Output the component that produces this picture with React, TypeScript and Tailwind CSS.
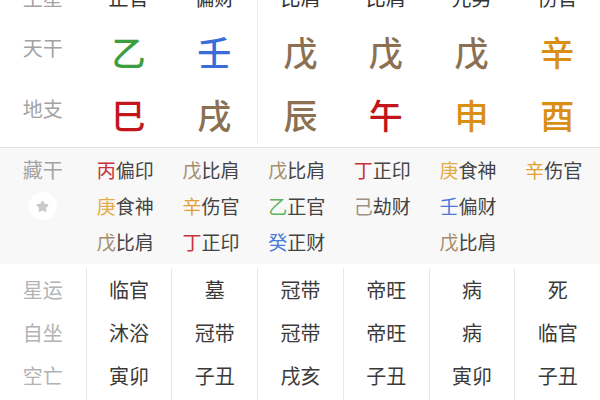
import { Star } from 'lucide-react'

type Cell = { t: string; c: string }

const mainStars = ['正官', '偏财', '比肩', '比肩', '元男', '伤官']

const stems: Cell[] = [
  { t: '乙', c: 'text-[#3d9e3f]' },
  { t: '壬', c: 'text-[#3a6bd6]' },
  { t: '戊', c: 'text-[#8b7152]' },
  { t: '戊', c: 'text-[#8b7152]' },
  { t: '戊', c: 'text-[#8b7152]' },
  { t: '辛', c: 'text-[#d98e14]' },
]

const branches: Cell[] = [
  { t: '巳', c: 'text-[#c3161c]' },
  { t: '戌', c: 'text-[#8b7152]' },
  { t: '辰', c: 'text-[#8b7152]' },
  { t: '午', c: 'text-[#c3161c]' },
  { t: '申', c: 'text-[#d98e14]' },
  { t: '酉', c: 'text-[#d98e14]' },
]

const red = 'text-[#c8323a]'
const yellow = 'text-[#e3ad4a]'
const tan = 'text-[#a58d6c]'
const orange = 'text-[#e0a032]'
const green = 'text-[#5db55e]'
const blue = 'text-[#4a7bd8]'
const grey = 'text-[#9c9080]'

const hidden: { g: string; c: string; s: string }[][] = [
  [
    { g: '丙', c: red, s: '偏印' },
    { g: '庚', c: yellow, s: '食神' },
    { g: '戊', c: tan, s: '比肩' },
  ],
  [
    { g: '戊', c: tan, s: '比肩' },
    { g: '辛', c: orange, s: '伤官' },
    { g: '丁', c: red, s: '正印' },
  ],
  [
    { g: '戊', c: tan, s: '比肩' },
    { g: '乙', c: green, s: '正官' },
    { g: '癸', c: blue, s: '正财' },
  ],
  [
    { g: '丁', c: red, s: '正印' },
    { g: '己', c: grey, s: '劫财' },
  ],
  [
    { g: '庚', c: yellow, s: '食神' },
    { g: '壬', c: blue, s: '偏财' },
    { g: '戊', c: tan, s: '比肩' },
  ],
  [{ g: '辛', c: orange, s: '伤官' }],
]

const fortune = [
  ['临官', '沐浴', '寅卯'],
  ['墓', '冠带', '子丑'],
  ['冠带', '冠带', '戌亥'],
  ['帝旺', '帝旺', '子丑'],
  ['病', '病', '寅卯'],
  ['死', '临官', '子丑'],
]

export default function App() {
  return (
    <div
      className="w-[600px] h-[400px] overflow-hidden bg-white"
      style={{ fontFamily: '"Noto Sans CJK SC", "Noto Sans", sans-serif' }}
    >
      {/* pillars */}
      <div className="-mt-[27px] pb-[4px]">
        <div className="grid grid-cols-7 h-[50px] text-[20px]">
          <div className="flex items-center justify-center text-[#a3a3a3]">主星</div>
          {mainStars.map((s, i) => (
            <div
              key={i}
              className={`flex items-center justify-center text-[#333] ${i === 2 ? 'border-l border-[#ececec]' : ''}`}
            >
              {s}
            </div>
          ))}
        </div>
        <div className="grid grid-cols-7 h-[56px]">
          <div className="flex items-center justify-center text-[20px] text-[#a3a3a3] pb-[6px]">天干</div>
          {stems.map((s, i) => (
            <div
              key={i}
              className={`flex items-center justify-center text-[34px] font-medium ${s.c} ${i === 2 ? 'border-l border-[#ececec]' : ''}`}
            >
              {s.t}
            </div>
          ))}
        </div>
        <div className="grid grid-cols-7 h-[64px]">
          <div className="flex items-center justify-center text-[20px] text-[#a3a3a3] pb-[4px]">地支</div>
          {branches.map((s, i) => (
            <div
              key={i}
              className={`flex items-center justify-center text-[34px] font-medium pt-[6px] ${s.c} ${i === 2 ? 'border-l border-[#ececec]' : ''}`}
            >
              {s.t}
            </div>
          ))}
        </div>
      </div>

      {/* hidden stems */}
      <div className="grid grid-cols-7 h-[117px] bg-[#f8f8f8] border-t border-[#e0e0e0] pt-[4px] text-[19px]">
        <div className="flex flex-col items-center">
          <div className="h-9 flex items-center text-[#a3a3a3] text-[20px]">藏干</div>
          <div className="h-9 flex items-center">
            <div className="w-[28px] h-[28px] rounded-full bg-white flex items-center justify-center">
              <Star size={13} className="text-[#c9c9c9] fill-[#c9c9c9]" />
            </div>
          </div>
        </div>
        {hidden.map((col, i) => (
          <div key={i} className="flex flex-col pl-[11px]">
            {col.map((h, j) => (
              <div key={j} className="h-9 flex items-center">
                <span className={h.c}>{h.g}</span>
                <span className="text-[#444]">{h.s}</span>
              </div>
            ))}
          </div>
        ))}
      </div>

      {/* fortune */}
      <div className="grid grid-cols-7 pt-[4px] text-[20px]">
        <div className="flex flex-col text-[#b3b3b3]">
          {['星运', '自坐', '空亡'].map((l) => (
            <div key={l} className="h-[43px] flex items-center justify-center">
              {l}
            </div>
          ))}
        </div>
        {fortune.map((col, i) => (
          <div key={i} className="flex flex-col h-[140px] border-l border-[#e6e6e6] text-[#3a3a3a]">
            {col.map((v, j) => (
              <div key={j} className="h-[43px] flex items-center justify-center">
                {v}
              </div>
            ))}
          </div>
        ))}
      </div>
    </div>
  )
}
